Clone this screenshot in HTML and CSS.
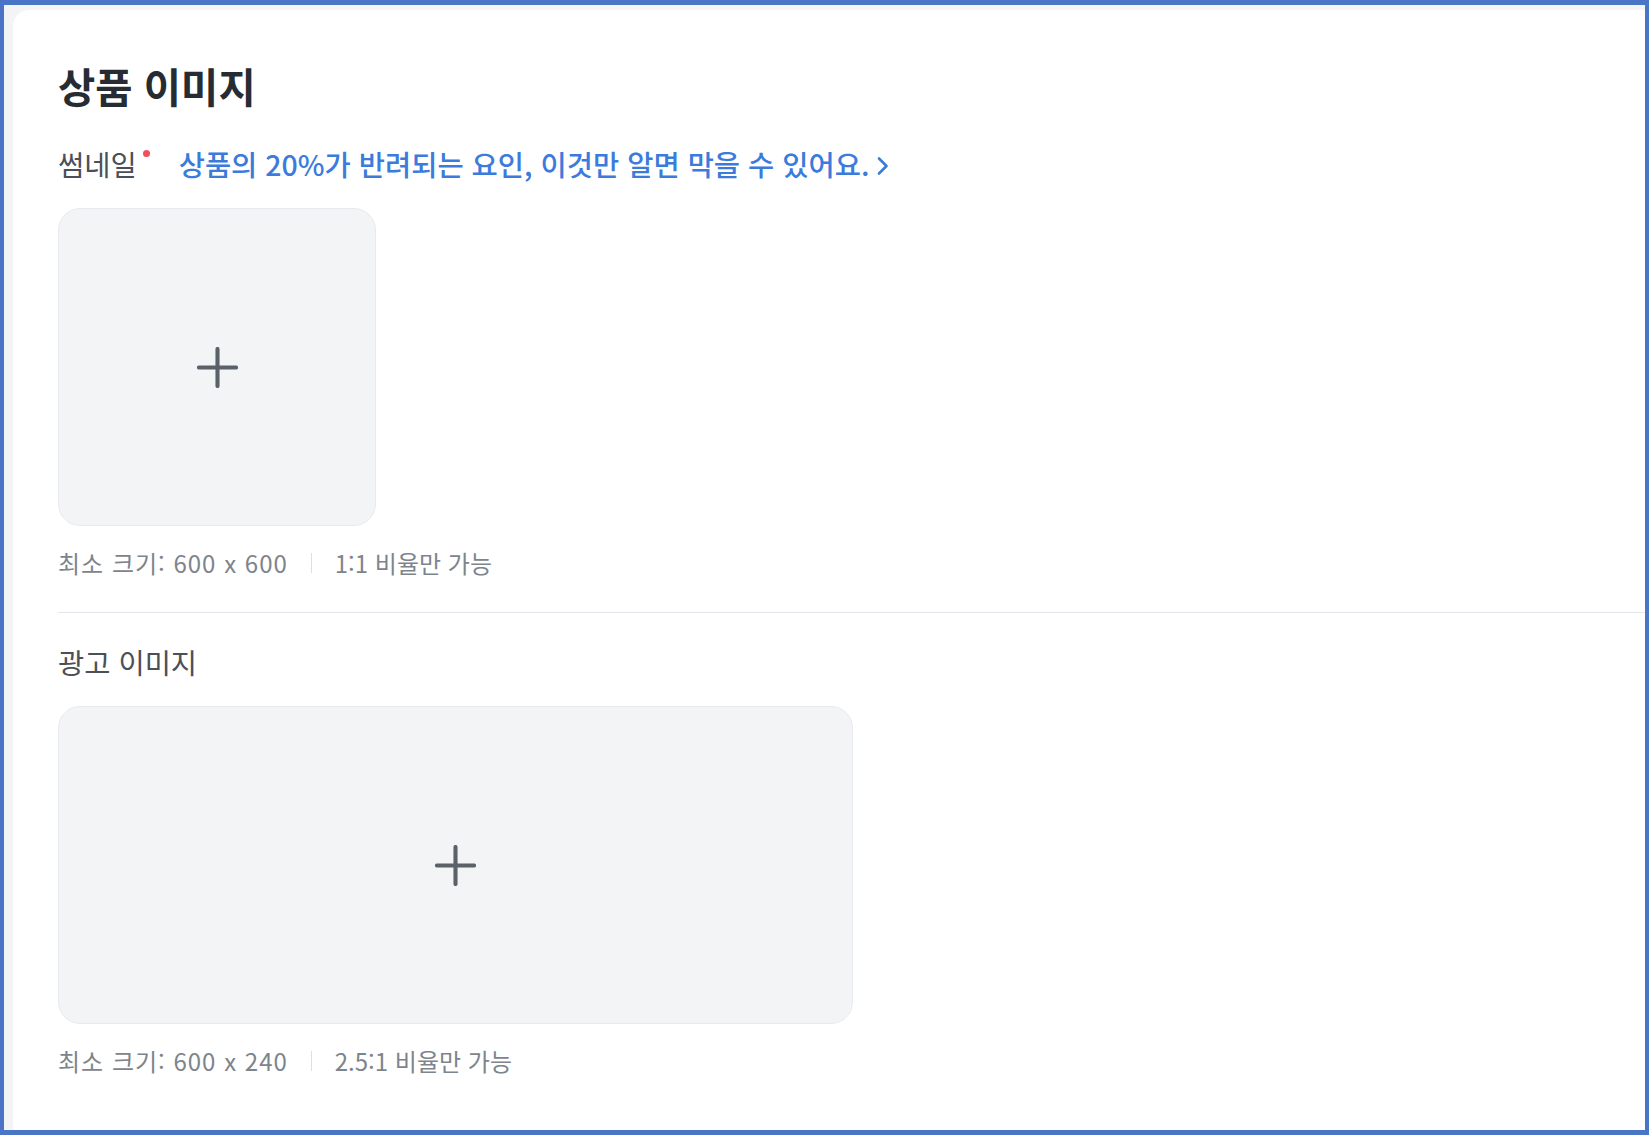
FILE: index.html
```html
<!DOCTYPE html>
<html lang="ko">

<head>
    <meta charset="UTF-8">
    <meta name="viewport" content="width=device-width, initial-scale=1.0">
    <title>상품 이미지</title>
    <link rel="stylesheet" href="styles.css">
</head>

<body>
    <div class="frame">
        <div class="image-card">
            <h2>상품 이미지</h2>

            <div class="field-label">
                <span class="label-text">썸네일</span>
                <span class="required-dot"></span>
                <a class="guide-link" href="#">상품의 20%가 반려되는 요인, 이것만 알면 막을 수 있어요.
                    <svg class="chevron" width="14" height="22" viewBox="0 0 14 22">
                        <path d="M3 3.5 L10.5 11 L3 18.5" fill="none" stroke="currentColor" stroke-width="2.6" stroke-linecap="round" stroke-linejoin="round"/>
                    </svg>
                </a>
            </div>
            <button class="upload-box square" type="button">
                <svg width="41" height="41" viewBox="0 0 42 42">
                    <path d="M21 2 V40 M2 21 H40" stroke="#5b6168" stroke-width="4.2" stroke-linecap="round"/>
                </svg>
            </button>
            <p class="upload-hint">
                <span class="hint-size">최소 크기: 600 x 600</span>
                <span class="hint-divider"></span>
                <span>1:1 비율만 가능</span>
            </p>

            <hr class="section-line">

            <div class="field-label ad">
                <span class="label-text">광고 이미지</span>
            </div>
            <button class="upload-box wide" type="button">
                <svg width="41" height="41" viewBox="0 0 42 42">
                    <path d="M21 2 V40 M2 21 H40" stroke="#5b6168" stroke-width="4.2" stroke-linecap="round"/>
                </svg>
            </button>
            <p class="upload-hint">
                <span class="hint-size">최소 크기: 600 x 240</span>
                <span class="hint-divider"></span>
                <span>2.5:1 비율만 가능</span>
            </p>
        </div>
    </div>
</body>

</html>
```

FILE: styles.css
```css
body {
    margin: 0;
    font-family: "Noto Sans CJK KR", "Noto Sans", sans-serif;
    background-color: #4a74c6;
}

.frame {
    height: 100vh;
    box-sizing: border-box;
    border-style: solid;
    border-color: #4a74c6;
    border-width: 5px 4px 5px 4px;
    background-color: #f3f4f6;
    padding: 5px 0 0 9px;
    display: flex;
}

.image-card {
    flex: 1;
    background: #ffffff;
    border-radius: 16px 0 0 0;
    padding: 51px 0 0 45px;
}

.image-card h2 {
    margin: 0;
    font-size: 40.5px;
    line-height: 50px;
    font-weight: 700;
    color: #272b32;
}

.field-label {
    display: flex;
    align-items: center;
    margin-top: 36px;
    height: 34px;
}

.field-label.ad {
    margin-top: 32px;
}

.label-text {
    font-size: 28.5px;
    line-height: 34px;
    color: #4b5058;
}

.required-dot {
    width: 7px;
    height: 7px;
    border-radius: 50%;
    background-color: #f0505c;
    align-self: flex-start;
    margin: 3px 0 0 6px;
}

.guide-link {
    display: flex;
    align-items: center;
    margin-left: 29px;
    font-size: 28.5px;
    line-height: 34px;
    font-weight: 500;
    color: #3b7bdb;
    text-decoration: none;
}

.chevron {
    margin-left: 7px;
    margin-top: 3px;
}

.upload-box {
    display: flex;
    justify-content: center;
    align-items: center;
    margin-top: 27px;
    height: 318px;
    padding: 0;
    background-color: #f2f4f6;
    border: 1px solid #e8eaed;
    border-radius: 22px;
    cursor: pointer;
}

.upload-box.square {
    width: 318px;
}

.upload-box.wide {
    width: 795px;
}

.upload-hint {
    display: flex;
    align-items: center;
    margin: 22px 0 0 0;
    font-size: 24px;
    line-height: 30px;
    color: #7e848c;
}

.hint-size {
    letter-spacing: 1px;
}

.hint-divider {
    width: 1px;
    height: 20px;
    margin: 0 23px;
    background-color: #dcdfe3;
}

.section-line {
    margin: 34px 0 0 0;
    border: none;
    border-top: 1px solid #e3e6ea;
}
```
